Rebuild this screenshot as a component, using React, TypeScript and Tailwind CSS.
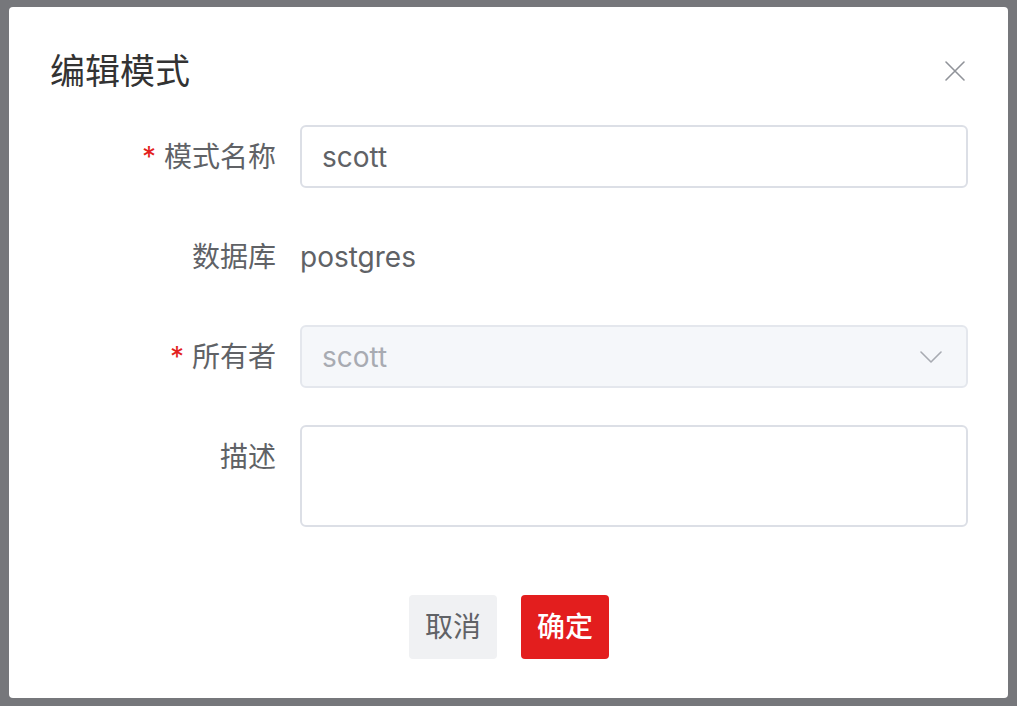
const font = { fontFamily: 'Inter, "Noto Sans CJK SC", sans-serif' };

type RowProps = {
  label: string;
  required?: boolean;
  tall?: boolean;
  children: React.ReactNode;
};

const FormRow = ({ label, required, tall, children }: RowProps) => (
  <div className={`mb-[37px] flex ${tall ? "items-start" : "items-center"}`}>
    <div className="flex h-[63px] w-[250px] shrink-0 items-center justify-end pr-[24px] text-[28px] text-[#606266]">
      {required && <span className="mr-[8px] text-[#e31e1e]">*</span>}
      {label}
    </div>
    <div className="flex-1">{children}</div>
  </div>
);

export default function App() {
  return (
    <div className="h-[706px] w-[1017px] overflow-hidden bg-[#76777b] pl-[9px] pt-[7px]" style={font}>
      <div className="flex h-[691px] w-[999px] flex-col rounded-[4px] bg-white pl-[41px] pr-[40px] pt-[40px]">
        <div className="flex h-[48px] items-center justify-between">
          <h2 className="text-[35px] leading-none text-[#333333]">编辑模式</h2>
          <svg width="22" height="22" viewBox="0 0 22 22" className="mr-[2px]" fill="none">
            <path d="M2 2 L20 20 M20 2 L2 20" stroke="#909399" strokeWidth="1.6" strokeLinecap="round" />
          </svg>
        </div>

        <div className="mt-[30px]">
          <FormRow label="模式名称" required>
            <div className="flex h-[63px] items-center rounded-[6px] border-2 border-[#dcdfe6] px-[20px] text-[28px] text-[#606266]">
              scott
            </div>
          </FormRow>

          <FormRow label="数据库">
            <div className="flex h-[63px] items-center text-[28px] text-[#606266]">postgres</div>
          </FormRow>

          <FormRow label="所有者" required>
            <div className="flex h-[63px] items-center justify-between rounded-[6px] border-2 border-[#e4e7ed] bg-[#f5f7fa] pl-[20px] pr-[24px] text-[28px] text-[#a8abb2]">
              scott
              <svg width="22" height="12" viewBox="0 0 22 12" fill="none">
                <path d="M1 1 L11 11 L21 1" stroke="#a8abb2" strokeWidth="1.6" strokeLinecap="round" strokeLinejoin="round" />
              </svg>
            </div>
          </FormRow>

          <FormRow label="描述" tall>
            <div className="h-[102px] rounded-[6px] border-2 border-[#dcdfe6]" />
          </FormRow>
        </div>

        <div className="mt-[31px] flex justify-center gap-[24px]">
          <button className="flex h-[64px] w-[88px] items-center justify-center rounded-[4px] bg-[#f0f1f3] text-[28px] text-[#606266]">
            取消
          </button>
          <button className="flex h-[64px] w-[88px] items-center justify-center rounded-[4px] bg-[#e31e1e] text-[28px] font-medium text-white">
            确定
          </button>
        </div>
      </div>
    </div>
  );
}
